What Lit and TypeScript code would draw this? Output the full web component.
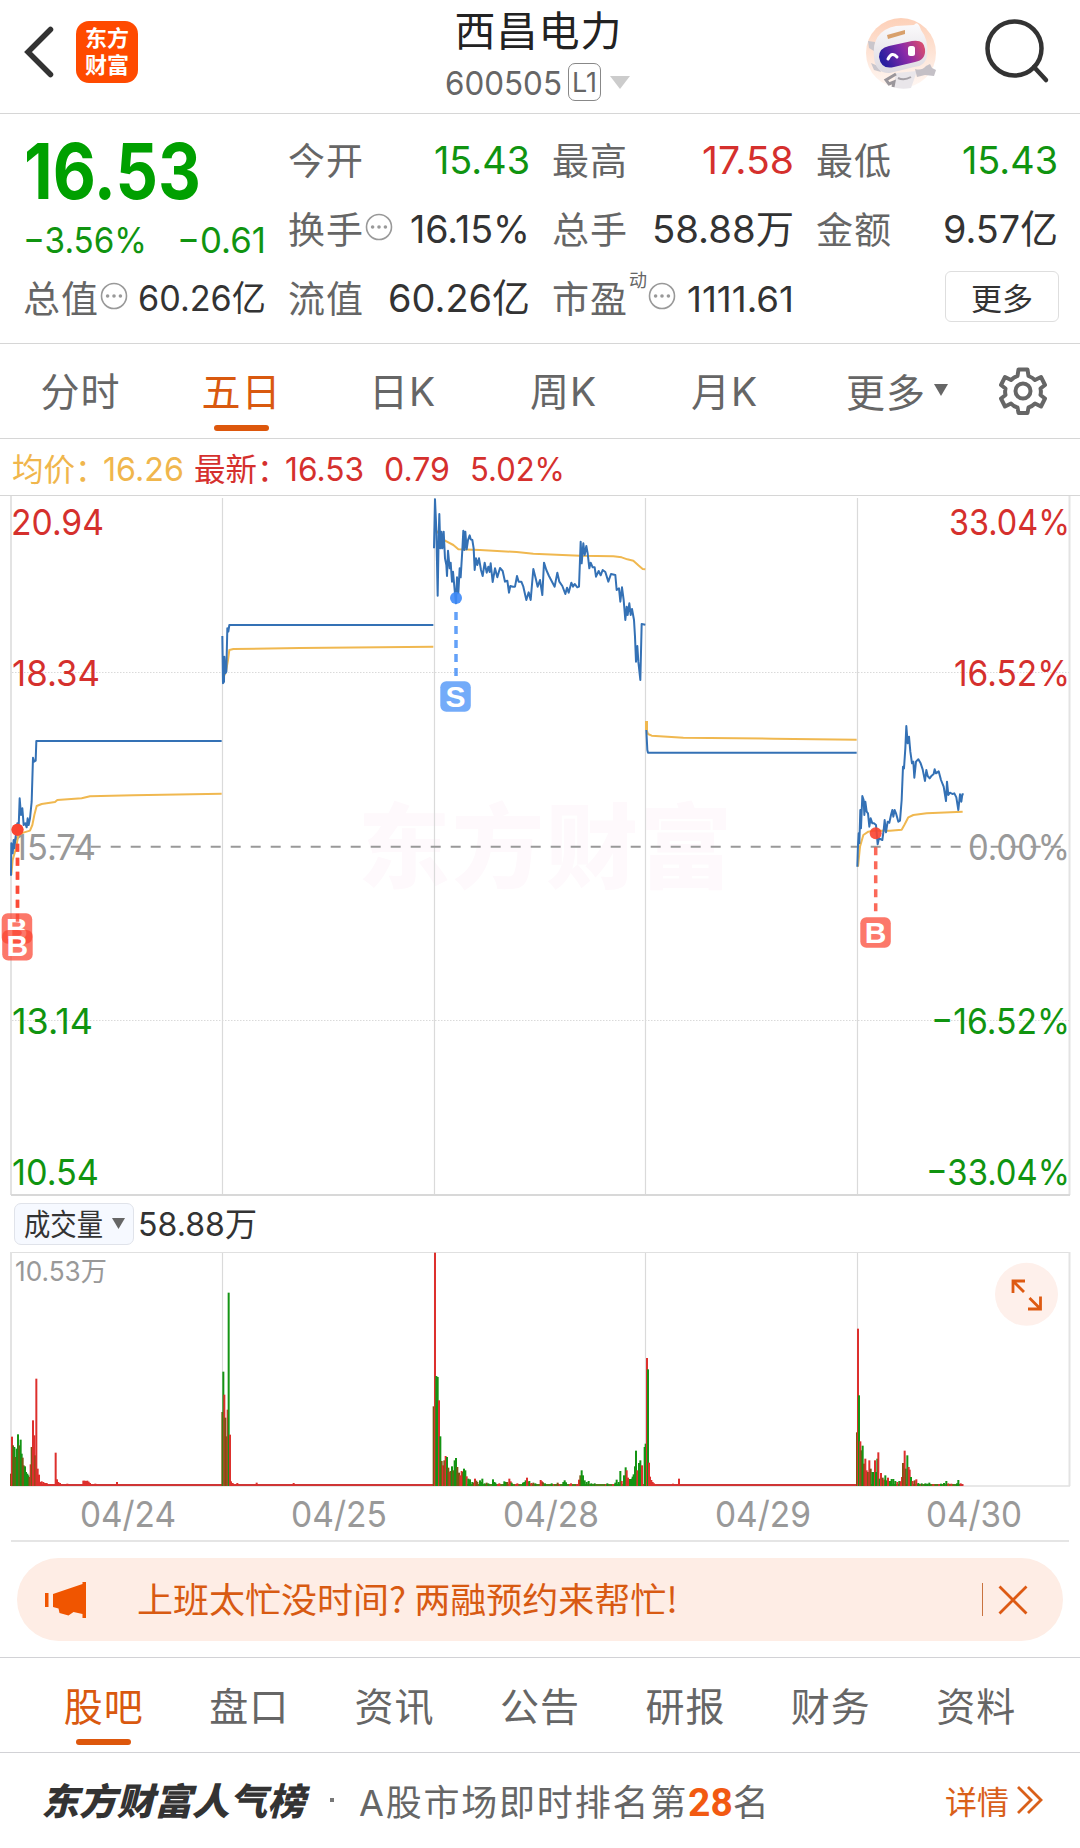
import {LitElement, html, svg, css} from 'lit';
import {customElement, state} from 'lit/decorators.js';
import {classMap} from 'lit/directives/class-map.js';

interface Series {
  // origin of the segment; points are stored in thirds of a pixel
  x: number;
  y: number;
  price: string;
  avg: string;
}

const SERIES: Series[] = [
  {
    x: 0, y: 490,
    price: '33,1157 34,1060 38,1090 41,1050 43,1075 47,1040 52,1000 56,1010 59,925 63,975 67,955 71,1005 76,1000 80,1012 83,985 86,1005 90,985 95,935 99,803 102,815 107,812 109,753 665,753',
    avg: '34,1155 38,1110 48,1075 55,1035 70,1028 90,1022 97,1005 103,975 110,948 125,942 165,936 172,930 245,925 270,919 400,916 665,911',
  },
  {
    x: 0, y: 490,
    price: '667,438 669,580 672,575 673,500 676,550 679,545 682,415 685,425 688,405 1300,405',
    avg: '671,560 678,545 684,510 688,480 700,477 900,474 1300,470',
  },
  {
    x: 420, y: 490,
    price: '42,175 45,28 49,120 53,317 56,140 58,72 61,175 64,125 67,175 71,125 75,205 79,225 81,258 84,182 89,235 92,218 96,275 99,245 104,300 108,340 111,262 115,310 119,235 122,262 127,180 130,122 133,180 136,125 140,178 144,150 149,136 152,148 157,150 161,175 164,240 168,205 172,225 177,205 183,240 188,258 194,218 200,248 205,230 209,246 212,220 218,276 225,235 232,262 240,234 248,243 255,275 262,272 267,308 271,288 279,290 285,290 291,258 296,275 304,275 310,290 319,330 326,307 332,330 340,237 347,265 353,290 360,270 367,315 372,218 379,240 387,258 396,275 404,290 412,248 418,275 427,288 436,312 441,293 446,308 454,278 459,290 464,282 472,292 477,290 482,155 485,220 490,160 494,195 499,168 503,190 508,235 512,218 518,232 524,232 528,260 536,243 542,256 548,240 556,246 565,275 573,252 586,255 590,300 597,295 601,335 606,292 611,330 616,390 620,350 623,375 628,340 632,375 636,357 642,390 645,440 648,515 652,468 655,515 661,570 665,402 676,404',
    avg: '43,115 75,152 100,165 115,178 180,180 290,186 340,191 480,197 580,199 605,202 622,208 640,212 655,226 668,237 676,238',
  },
  {
    x: 640, y: 600,
    price: '19,390 22,450 24,458 650,458',
    avg: '19,365 20,390 24,402 35,407 130,413 400,416 650,419',
  },
  {
    x: 640, y: 600,
    price: '652,800 654,735 656,700 658,730 661,630 663,685 667,588 671,600 673,645 676,605 680,635 684,640 688,680 692,655 697,670 702,670 708,675 713,733 717,715 727,720 731,690 734,660 738,697 743,665 748,668 753,645 757,630 760,650 764,630 768,640 775,665 780,662 785,600 789,500 792,505 796,445 799,378 803,430 807,410 811,455 816,490 820,485 823,533 828,485 835,478 842,490 848,508 855,543 859,510 863,528 869,535 875,527 881,522 884,508 888,520 896,514 903,540 911,560 918,603 921,545 925,585 930,578 937,582 943,580 949,592 955,630 960,583 964,605 967,583 971,583',
    avg: '654,800 660,740 670,705 685,695 700,692 750,692 785,689 793,675 805,652 820,645 860,640 968,635',
  },
];

// x, height and colour of every volume bar, in thirds of a pixel.
// r = up, g = down, b = both overlapping
const VOLUME: {x: number; bars: string}[] = [
  {
    x: 0,
    bars: '33,37b 36,148r 39,122b 43,117g 46,87b 50,112g 54,155g 58,122b 62,139g 65,97g 68,85b 71,62b 75,59g 78,42g 82,37g 85,32g 88,27b 92,65r 95,117b 103,152r 106,92b 99,197r 109,322r 113,52r 117,34r 121,12r 125,14r 130,12r 135,9r 140,9r 154,6r 167,100r 171,20r 175,12r 180,9r 202,7r 250,16r 254,16r 258,15r 262,16r 266,13r 270,9r 286,7r 351,12r 667,222b 670,343g 673,274r 676,205b 680,149b 683,229r 686,580g 690,154r 693,14r 698,9r 712,9r 770,10r 881,9r',
  },
  {
    x: 420,
    bars: '41,239b 45,700r 49,330g 53,327g 57,257r 61,149g 65,75b 69,62r 73,77b 77,90r 81,87g 85,55b 89,42r 92,45b 96,59g 100,47b 104,77g 108,84g 112,57b 117,40b 121,32r 125,45r 129,42b 132,52g 136,47g 140,29r 145,22g 150,20g 157,12g 161,10b 165,22r 169,16b 172,12b 180,17g 184,12g 187,22g 194,8g 200,10b 205,8g 219,20g 223,12g 226,10g 238,8r 253,14g 258,12g 262,12b 268,22r 272,14r 275,10g 292,8r 309,10g 313,12g 317,17g 321,25r 325,13r 328,15g 334,9r 340,10b 346,8g 362,18r 366,14r 369,11b 375,8g 395,8g 413,10b 430,12g 434,17g 438,11g 453,8r 477,19r 481,32b 485,47g 489,32g 494,17g 500,12g 506,15g 514,8g 524,8g 562,8g 586,10g 590,19g 596,12g 601,45g 605,15r 612,32g 617,56g 620,47r 624,25r 630,21g 636,22g 633,21g 641,35g 645,59g 638,28g 648,106g 652,47r 657,69g 661,77g 666,62r 674,117g 677,127g 681,384r 684,350g 687,70r 690,28r 694,18r 698,12r 702,8r 706,6r',
  },
  {
    x: 640,
    bars: '99,7r 117,22r 651,161b 654,472r 657,272g 661,134r 664,107b 668,121g 672,67b 676,82r 680,47r 684,42b 688,77r 692,52b 697,42g 701,42g 705,77r 708,42g 712,82g 715,101r 719,22g 723,39r 728,25b 732,19r 736,32g 740,17g 744,25r 750,15g 755,21g 760,21g 766,15g 772,12r 778,15g 782,14r 786,27r 789,69b 794,106r 797,52b 802,92g 806,57r 809,49r 813,27g 818,15r 824,17b 829,20r 835,9g 845,8g 856,8g 862,7g 868,10g 880,6r 903,7g 912,9g 919,15g 925,8r 934,7r 951,8g 955,18g 962,8r',
  },
];

const BAR_COLORS: Record<string, string> = {r: '#dd302d', g: '#149414', b: '#7d5514'};

const AXIS: {text: string; x: number; y: number; w: number; cls: string}[] = [
  {text: '20.94', x: 11, y: 535, w: 93, cls: 'up'},
  {text: '18.34', x: 12, y: 686, w: 88, cls: 'up'},
  {text: '15.74', x: 13, y: 860, w: 83, cls: 'flat'},
  {text: '13.14', x: 12, y: 1034, w: 81, cls: 'down'},
  {text: '10.54', x: 12, y: 1185, w: 87, cls: 'down'},
  {text: '33.04%', x: 949, y: 535, w: 121, cls: 'up'},
  {text: '16.52%', x: 954, y: 686, w: 116, cls: 'up'},
  {text: '0.00%', x: 968, y: 860, w: 102, cls: 'flat'},
  {text: '−16.52%', x: 931, y: 1034, w: 139, cls: 'down'},
  {text: '−33.04%', x: 926, y: 1185, w: 144, cls: 'down'},
];

const DAY_LINES = [222.5, 434.5, 645.5, 857.5];

// text squeezed to a fixed width, centred on its own line
const fit = (text: string, width: number, size: number, cls = '') => html`
  <svg class="fit ${cls}" width=${width} height=${size} font-size=${size}>
    <text y=${size / 2 + size * 0.364} textLength=${width} lengthAdjust="spacingAndGlyphs">${text}</text>
  </svg>
`;

const dots = html`
  <svg class="dots" width="28" height="28" viewBox="0 0 28 28">
    <circle cx="14" cy="14" r="12.5" fill="none" stroke="#999" stroke-width="1.6"/>
    <circle cx="7.6" cy="14" r="1.8" fill="#999"/>
    <circle cx="14" cy="14" r="1.8" fill="#999"/>
    <circle cx="20.4" cy="14" r="1.8" fill="#999"/>
  </svg>
`;

@customElement('stock-header')
export class StockHeader extends LitElement {
  static styles = css`
    :host {
      display: grid;
      grid-template-columns: 1fr auto 1fr;
      height: 113px;
      border-bottom: 1px solid #d6d6d6;
    }
    .left {
      display: flex;
      align-items: flex-start;
      padding: 21px 0 0 22px;
      gap: 22px;
    }
    .logo {
      width: 62px;
      height: 62px;
      box-sizing: border-box;
      padding-top: 4px;
      border-radius: 13px;
      background: #ff4a00;
      color: #fff;
      font-size: 22px;
      line-height: 27px;
      font-weight: 700;
      text-align: center;
    }
    .middle {
      display: flex;
      flex-direction: column;
      align-items: center;
      margin-right: 3px;
    }
    .name {
      margin-top: 3px;
      font-size: 41px;
      line-height: 56px;
      letter-spacing: 1px;
      color: #222;
    }
    .code {
      display: flex;
      align-items: center;
      height: 40px;
      margin: 3px 2px 0 0;
      color: #666;
    }
    .level {
      display: flex;
      align-items: center;
      justify-content: center;
      width: 31px;
      height: 36px;
      margin-left: 6px;
      border: 1.500px solid #888;
      border-radius: 7px;
    }
    .caret {
      margin-left: 9px;
    }
    .right {
      display: flex;
      justify-content: flex-end;
      align-items: flex-start;
      gap: 45px;
      padding: 16px 30px 0 0;
    }
    .fit {
      overflow: visible;
      font-family: Inter, sans-serif;
      fill: #666;
    }
  `;

  render() {
    return html`
      <div class="left">
        <svg width="32" height="62" viewBox="0 0 32 62">
          <path d="M28.500 8.500 6 31l22.500 22.500" fill="none" stroke="#333" stroke-width="5.500" stroke-linecap="round"/>
        </svg>
        <div class="logo">东方<br>财富</div>
      </div>
      <div class="middle">
        <div class="name">西昌电力</div>
        <div class="code">
          ${fit('600505', 117, 33)}
          <span class="level">${fit('L1', 25, 27)}</span>
          <svg class="caret" width="20" height="13"><path d="M0 0h20L10 13z" fill="#ccc"/></svg>
        </div>
      </div>
      <div class="right">
        <svg width="74" height="74" viewBox="0 0 74 74">
          <defs>
            <linearGradient id="visor" x1="0" y1=".4" x2="1" y2=".1">
              <stop offset="0" stop-color="#2a1fa0"/>
              <stop offset=".5" stop-color="#8a2aa8"/>
              <stop offset="1" stop-color="#e0506a"/>
            </linearGradient>
            <linearGradient id="peach" x1="0" y1="0" x2="0" y2="1">
              <stop offset="0" stop-color="#fdd0b8"/>
              <stop offset="1" stop-color="#fff8f4"/>
            </linearGradient>
            <linearGradient id="shell" x1="0" y1="0" x2="0" y2="1">
              <stop offset="0" stop-color="#fbfafc"/>
              <stop offset="1" stop-color="#dddae0"/>
            </linearGradient>
          </defs>
          <circle cx="36" cy="37" r="35" fill="url(#peach)"/>
          <path d="M31 57 28 71q8 3 18 1l6-17z" fill="#e9e6ea"/>
          <path d="M31 58l-10 6 3 4 5-2-1 5" stroke="#9a969b" stroke-width="3" fill="none"/>
          <path d="M33 62q6 3 13-1" stroke="#a5a1a7" stroke-width="2" fill="none"/>
          <path d="M50 53q7 2 11-3l4-2 2 4 4 2-2 6-9-1-8 2z" fill="#c4c0c6"/>
          <path d="M3 25l7 1-1 9-5-3zM6 47l7 3 3 6-7-2z" fill="#c9c6cc"/>
          <path d="M9 42Q6 15 31 10l18-1q4-5 7 5 8 10 6 25-1 11-13 12l-24 6Q11 58 9 42z" fill="url(#shell)"/>
          <path d="M22 19l18-5v4l-17 5z" fill="#d8a06c"/>
          <path d="M14 41q0-9 10-11l23-5q12-2 13 8 1 11-10 13l-21 5Q16 54 14 41z" fill="url(#visor)"/>
          <path d="M23 43q4-8 9-2" fill="none" stroke="#fff" stroke-width="3" stroke-linecap="round"/>
          <rect x="43" y="30" width="7" height="10" rx="2.500" fill="#fff"/>
        </svg>
        <svg width="66" height="68" viewBox="0 0 66 68">
          <circle cx="30.500" cy="32.500" r="27" fill="none" stroke="#333" stroke-width="4.500"/>
          <path d="M50 51l12 13" stroke="#333" stroke-width="4.500" stroke-linecap="round"/>
        </svg>
      </div>
    `;
  }
}

@customElement('quote-panel')
export class QuotePanel extends LitElement {
  static styles = css`
    :host {
      display: grid;
      grid-template-columns: 240px 239px 239px 239px;
      grid-template-rows: repeat(3, 69px);
      column-gap: 25px;
      height: 217px;
      padding: 12px 0 0 24px;
      border-bottom: 1px solid #d6d6d6;
    }
    .main {
      grid-row: 1 / 3;
      display: flex;
      flex-direction: column;
      padding-top: 6px;
    }
    .price {
      font-weight: 700;
    }
    .change {
      display: flex;
      justify-content: space-between;
      margin-top: 13px;
    }
    .cell {
      display: flex;
      align-items: center;
      justify-content: space-between;
    }
    .label {
      display: flex;
      align-items: center;
      margin: -3px 0 0 -1px;
      color: #666;
      font-size: 37px;
      letter-spacing: 1px;
      white-space: nowrap;
    }
    .label sup {
      align-self: flex-start;
      margin: 2px 0 0 1px;
      font-size: 18px;
      line-height: 18px;
      letter-spacing: 0;
    }
    .dots {
      margin: -3px 0 0 1px;
    }
    .fit {
      overflow: visible;
      margin: 0 -1.500px;
      font-family: Inter, 'Noto Sans CJK SC', sans-serif;
      fill: #333;
    }
    .up {
      fill: #d5302d;
    }
    .down {
      fill: #109410;
    }
    .price.down {
      margin-left: -0.500px;
      fill: #00a000;
    }
    .more {
      display: flex;
      align-items: center;
      justify-content: center;
      width: 112px;
      height: 49px;
      margin: -4px -3px 0 auto;
      border: 1px solid #dedede;
      border-radius: 6px;
      font-size: 31px;
      color: #333;
    }
  `;

  render() {
    return html`
      <div class="main">
        ${fit('16.53', 177, 77, 'price down')}
        <div class="change">
          ${fit('−3.56%', 124, 35.5, 'down')}
          ${fit('−0.61', 89, 35.5, 'down')}
        </div>
      </div>
      <div class="cell"><span class="label">今开</span>${fit('15.43', 96, 38.5, 'down')}</div>
      <div class="cell"><span class="label">最高</span>${fit('17.58', 92, 38.5, 'up')}</div>
      <div class="cell"><span class="label">最低</span>${fit('15.43', 96, 38.5, 'down')}</div>
      <div class="cell"><span class="label">换手${dots}</span>${fit('16.15%', 120, 38.5)}</div>
      <div class="cell"><span class="label">总手</span>${fit('58.88万', 142, 38.5)}</div>
      <div class="cell"><span class="label">金额</span>${fit('9.57亿', 115, 38.5)}</div>
      <div class="cell"><span class="label">总值${dots}</span>${fit('60.26亿', 128, 35)}</div>
      <div class="cell"><span class="label">流值</span>${fit('60.26亿', 142, 38.5)}</div>
      <div class="cell"><span class="label">市盈<sup>动</sup>${dots}</span>${fit('1111.61', 107, 35.5)}</div>
      <div class="cell"><span class="more">更多</span></div>
    `;
  }
}

@customElement('period-tabs')
export class PeriodTabs extends LitElement {
  static styles = css`
    :host {
      display: flex;
      height: 94px;
      border-bottom: 1px solid #d6d6d6;
      font-size: 39px;
      color: #666;
    }
    .tab {
      display: flex;
      flex-direction: column;
      align-items: center;
      width: 161px;
      letter-spacing: 1px;
      line-height: 82px;
      padding-top: 7px;
      box-sizing: border-box;
    }
    .tab.active {
      color: #d9590f;
    }
    .tab.active::after {
      content: '';
      width: 55px;
      height: 6px;
      margin-top: -8px;
      border-radius: 3px;
      background: #dd570c;
    }
    .more {
      flex-direction: row;
      align-items: center;
      justify-content: center;
      gap: 8px;
      width: 184px;
      height: 94px;
      padding-top: 4px;
    }
    .more svg {
      margin-top: -6px;
    }
    .gear {
      margin: 23px 0 0 10px;
    }
  `;

  @state() active = '五日';

  render() {
    return html`
      ${['分时', '五日', '日K', '周K', '月K'].map(t => html`
        <div class=${classMap({tab: true, active: t === this.active})} @click=${() => this.active = t}>${t}</div>
      `)}
      <div class="tab more">更多<svg width="14" height="12"><path d="M0 0h14L7 12z" fill="#666"/></svg></div>
      <svg class="gear" width="48" height="48" viewBox="-24 -24 48 48" fill="none" stroke="#666" stroke-width="4">
        <path d="M-4.500-21.500h9l1 6.500q4 1.500 6.500 4l6-3 4 8-4.500 3.500q.8 3 0 6.500l4.500 3.500-4 8-6-3q-3 3-6.500 4l-1 5.500h-9l-1-5.500q-4-1-6.500-4l-6 3-4-8 4.500-3.500q-.8-3 0-6.500l-4.500-3.500 4-8 6 3q3-3 6.500-4z" stroke-linejoin="round"/>
        <circle r="7.500"/>
      </svg>
    `;
  }
}

@customElement('price-chart')
export class PriceChart extends LitElement {
  static styles = css`
    :host {
      display: block;
    }
    .legend {
      display: flex;
      align-items: center;
      height: 56px;
      padding-left: 12px;
      border-bottom: 1px solid #d6d6d6;
      font-size: 31.500px;
      color: #d5302d;
    }
    .legend .title {
      width: 91px;
      white-space: nowrap;
    }
    .legend .avg {
      color: #f0b64c;
    }
    .legend .fit {
      margin: 2px 20px 0 0;
      fill: #d5302d;
    }
    .legend .fit.avg {
      margin-right: 10px;
      fill: #f0b64c;
    }
    .fit {
      overflow: visible;
      font-family: Inter, sans-serif;
    }
    .plot {
      display: block;
      overflow: visible;
      margin-top: -1px;
    }
    .axis {
      font-family: Inter, sans-serif;
      font-size: 36px;
    }
    .up {
      fill: #d5302d;
    }
    .down {
      fill: #109410;
    }
    .flat {
      fill: #999;
    }
    .line {
      fill: none;
      stroke-width: 2;
      stroke-linejoin: round;
      vector-effect: non-scaling-stroke;
    }
    .mark {
      fill: #fff;
      font-family: 'Liberation Sans', sans-serif;
      font-size: 30px;
      font-weight: 700;
      text-anchor: middle;
    }
    .watermark {
      fill: #fef9fc;
      font-size: 92px;
      font-weight: 900;
    }
  `;

  marker(x: number, y: number, badgeX: number, badgeY: number, text: string, color: string) {
    return svg`
      <path d="M${x} ${y + 14}V${badgeY - 4}" stroke=${color} stroke-width="3.500" stroke-dasharray="8 6" opacity=".8"/>
      <circle cx=${x} cy=${y} r="6" fill=${color} opacity=".9"/>
      <rect x=${badgeX} y=${badgeY} width="30.500" height="30.500" rx="6" fill=${color} opacity=".72"/>
      <text class="mark" x=${badgeX + 15.2} y=${badgeY + 26}>${text}</text>
    `;
  }

  render() {
    return html`
      <div class="legend">
        <span class="title avg">均价：</span>${fit('16.26', 81, 33, 'avg')}
        <span class="title">最新：</span>${fit('16.53', 79, 33)}
        ${fit('0.79', 66, 33)}
        ${fit('5.02%', 95, 33)}
      </div>
      <svg class="plot" width="1080" height="701" viewBox="0 495 1080 701">
        <text class="watermark" x="358" y="881" textLength="374">东方财富</text>
        <g stroke="#dadada" stroke-width="1.200">
          ${DAY_LINES.map(x => svg`<path d="M${x} 498V1195"/>`)}
          <path d="M11 496v699M1069.500 496v699" stroke="#e3e3e3" stroke-width="2"/>
          <path d="M11 1195h1059" stroke="#d8d8d8" stroke-width="2"/>
          <path d="M12 672.500h1057M12 1020.500h1057" stroke-dasharray="1.500 1.500" stroke-width="1"/>
        </g>
        ${AXIS.map(a => svg`
          <text class="axis ${a.cls}" x=${a.x} y=${a.y} textLength=${a.w} lengthAdjust="spacingAndGlyphs">${a.text}</text>
        `)}
        <path d="M50.700 846.700H1069" stroke="#999" stroke-width="2" stroke-dasharray="10 10"/>
        ${SERIES.map(s => svg`
          <g transform="translate(${s.x} ${s.y}) scale(.33333)">
            <polyline class="line" points=${s.avg} stroke="#f0b850"/>
            <polyline class="line" points=${s.price} stroke="#3471b5"/>
          </g>
        `)}
        <path d="M646.500 721v9" stroke="#f0b850" stroke-width="3"/>
        ${this.marker(17.5, 829.7, 1.7, 913.3, 'B', '#fb4430')}
        ${this.marker(17.5, 829.7, 2.2, 930, 'B', '#fb4430')}
        ${this.marker(456, 598, 440.3, 681.3, 'S', '#3d8af7')}
        ${this.marker(875.7, 833.3, 860.3, 917.3, 'B', '#fb4430')}
      </svg>
    `;
  }
}

@customElement('volume-chart')
export class VolumeChart extends LitElement {
  static styles = css`
    :host {
      display: block;
    }
    .bar {
      display: flex;
      align-items: center;
      height: 56px;
      padding-left: 14px;
    }
    .select {
      display: flex;
      align-items: center;
      gap: 9px;
      width: 120px;
      height: 42px;
      box-sizing: border-box;
      padding-left: 9px;
      margin: -1px 4px 0 0;
      border: 1px solid #e0e3ea;
      border-radius: 7px;
      background: #f6f9ff;
    }
    .fit, .max {
      overflow: visible;
      font-family: Inter, 'Noto Sans CJK SC', sans-serif;
      fill: #333;
    }
    .plot {
      display: block;
    }
    .max {
      font-size: 27px;
      fill: #999;
    }
    .dates {
      display: flex;
      align-items: center;
      height: 51px;
      margin: 0 0 0 11px;
      padding: 1px 0 1px 11px;
      width: 1047px;
      border-bottom: 2px solid #e5e5e5;
    }
    .date {
      display: flex;
      justify-content: center;
      flex: 0 0 211.600px;
    }
    .date .fit {
      fill: #999;
    }
  `;

  renderBar(x: number, bar: string) {
    const [left, rest] = bar.split(',');
    const h = parseInt(rest) / 3;
    return svg`<rect x=${x + (Number(left) - 3) / 3} y=${1486 - h} width="2" height=${h} fill=${BAR_COLORS[rest.slice(-1)]}/>`;
  }

  render() {
    return html`
      <div class="bar">
        <div class="select">
          ${fit('成交量', 79, 30)}
          <svg width="13" height="11"><path d="M0 0h13L6.500 11z" fill="#666"/></svg>
        </div>
        ${fit('58.88万', 119, 32.5)}
      </div>
      <svg class="plot" width="1080" height="235" viewBox="0 1252 1080 235">
        <g stroke="#dadada" stroke-width="1.200">
          ${DAY_LINES.map(x => svg`<path d="M${x} 1252V1486"/>`)}
          <path d="M11 1252.500h1059" stroke="#e0e0e0"/>
          <path d="M11 1252v234M1069.500 1252v234" stroke="#e3e3e3" stroke-width="2"/>
          <path d="M11 1486h1059" stroke="#e0e0e0" stroke-width="1.500"/>
        </g>
        <text class="max" x="15" y="1281" textLength="92" lengthAdjust="spacingAndGlyphs">10.53万</text>
        <path d="M11 1485H963.500" stroke="#cf3535" stroke-width="2"/>
        <path d="M434 1485H645M857 1485H960" stroke="#4f7d18" stroke-width="2" stroke-dasharray="9 3 4 2"/>
        ${VOLUME.map(v => v.bars.split(' ').map(b => this.renderBar(v.x, b)))}
        <circle cx="1026.500" cy="1294.300" r="31.500" fill="#fef0eb"/>
        <path d="M1025 1281h-12v12M1013.500 1281.500l10.500 10.500M1028 1309h12.500v-12.500M1040 1308.500l-10.500-10.500"
              fill="none" stroke="#de5a12" stroke-width="2.800"/>
      </svg>
      <div class="dates">
        ${['04/24', '04/25', '04/28', '04/29', '04/30'].map(d => html`<div class="date">${fit(d, 96, 36)}</div>`)}
      </div>
    `;
  }
}

@customElement('notice-banner')
export class NoticeBanner extends LitElement {
  static styles = css`
    :host {
      display: flex;
      align-items: center;
      height: 83px;
      margin: 16px 17px;
      border-radius: 42px;
      background: #feede5;
    }
    .horn {
      margin-left: 28px;
    }
    .text {
      flex: 1;
      margin: 6px 0 0 50px;
    }
    .fit {
      overflow: visible;
      font-family: 'Noto Sans CJK SC', sans-serif;
      fill: #d85a12;
    }
    .divider {
      width: 1px;
      height: 33px;
      background: #c9733f;
    }
    .close {
      margin: 0 35px 0 15px;
    }
  `;

  render() {
    return html`
      <svg class="horn" width="42" height="36" viewBox="0 0 42 36" fill="#f05500">
        <path d="M0 11h3.500v14H0zM8 12l29.500-10V0H41v36h-3.500v-4l-9-2-5 3.500-9-2.500-1-4.500L8 25z"/>
      </svg>
      <div class="text">${fit('上班太忙没时间? 两融预约来帮忙!', 541, 35)}</div>
      <div class="divider"></div>
      <svg class="close" width="30" height="30"><path d="M1.500 1.500l27 27M28.500 1.500l-27 27" stroke="#dd5a14" stroke-width="2.800"/></svg>
    `;
  }
}

@customElement('info-tabs')
export class InfoTabs extends LitElement {
  static styles = css`
    :host {
      display: flex;
      height: 94px;
      padding: 0 31px;
      border-top: 1px solid #d2d2d6;
      border-bottom: 1px solid #d2d2d6;
      font-size: 39px;
      color: #666;
    }
    .tab {
      display: flex;
      flex-direction: column;
      align-items: center;
      flex: 1;
      line-height: 82px;
      padding-top: 8px;
      letter-spacing: 1px;
    }
    .active {
      color: #d9590f;
    }
    .active::after {
      content: '';
      width: 55px;
      height: 6px;
      margin-top: -9px;
      border-radius: 3px;
      background: #dd570c;
    }
  `;

  @state() active = '股吧';

  render() {
    return html`
      ${['股吧', '盘口', '资讯', '公告', '研报', '财务', '资料'].map(t => html`
        <div class=${classMap({tab: true, active: t === this.active})} @click=${() => this.active = t}>${t}</div>
      `)}
    `;
  }
}

@customElement('rank-row')
export class RankRow extends LitElement {
  static styles = css`
    :host {
      display: flex;
      align-items: center;
      height: 95px;
      padding: 0 36px 2px 41px;
      box-sizing: border-box;
      font-size: 36px;
      color: #666;
      white-space: nowrap;
    }
    .brand {
      overflow: visible;
      margin-top: 4px;
      font-family: 'Noto Sans CJK SC', sans-serif;
      font-weight: 900;
      font-style: italic;
      fill: #333;
    }
    .dot {
      width: 4px;
      height: 4px;
      margin: 0 25px 0 25px;
      background: #777;
    }
    .rank {
      flex: 1;
      letter-spacing: 1.800px;
    }
    .rank b {
      font-family: Roboto, sans-serif;
      font-size: 39px;
      letter-spacing: 0;
      color: #f25a12;
    }
    .detail {
      font-size: 32px;
      color: #d9601a;
    }
    .arrows {
      margin: 0 0 0 7px;
    }
  `;

  render() {
    return html`
      ${fit('东方财富人气榜', 264, 37, 'brand')}
      <span class="dot"></span>
      <span class="rank">A股市场即时排名第<b>28</b>名</span>
      <span class="detail">详情</span>
      <svg class="arrows" width="28" height="30" viewBox="0 0 28 30">
        <path d="M2 2l13 13L2 28M12 2l13 13-13 13" fill="none" stroke="#d9601a" stroke-width="2.800"/>
      </svg>
    `;
  }
}

@customElement('app-root')
export class AppRoot extends LitElement {
  static styles = css`
    :host {
      display: block;
      width: 1080px;
      height: 1848px;
      overflow: hidden;
      background: #fff;
      font-family: Inter, 'Noto Sans CJK SC', sans-serif;
    }
  `;

  render() {
    return html`
      <stock-header></stock-header>
      <quote-panel></quote-panel>
      <period-tabs></period-tabs>
      <price-chart></price-chart>
      <volume-chart></volume-chart>
      <notice-banner></notice-banner>
      <info-tabs></info-tabs>
      <rank-row></rank-row>
    `;
  }
}
